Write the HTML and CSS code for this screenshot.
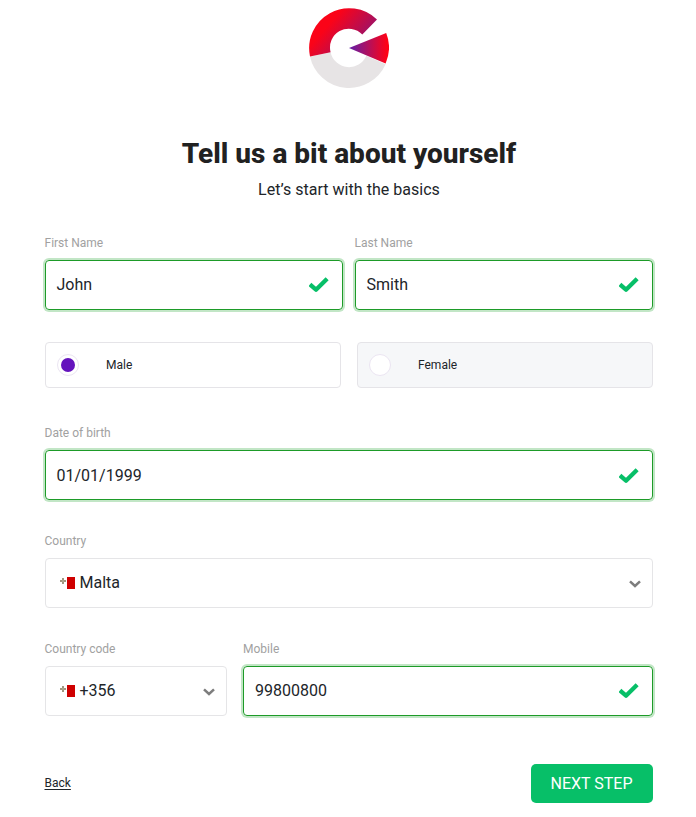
FILE: index.html
```html
<!DOCTYPE html>
<html lang="en">
<head>
<meta charset="utf-8">
<title>Tell us a bit about yourself</title>
<link rel="stylesheet" href="styles.css">
</head>
<body>
<svg width="0" height="0" class="defs">
  <symbol id="check" viewBox="0 0 20 16"><path d="M2.6 8.9 7 12.7 16.6 3.3" fill="none" stroke="#07bf68" stroke-width="4.3" stroke-linecap="square" stroke-linejoin="round"/></symbol>
  <symbol id="chevron" viewBox="0 0 12 8"><path d="M1 1.3 6 6 11 1.3" fill="none" stroke="#7d7d7d" stroke-width="2.5"/></symbol>
  <symbol id="malta" viewBox="0 0 16 12"><path d="M8 0h8v12H8z" fill="#cf0000"/><path d="M3 1h2v2h2v2H5v2H3V5H1V3h2z" fill="#a09880"/><path d="M3.5 3.5h1v1h-1z" fill="#d3cdbb"/></symbol>
</svg>
<main class="page">
  <svg class="logo" width="80" height="80" viewBox="0 0 80 80">
    <defs>
      <linearGradient id="arc" gradientUnits="userSpaceOnUse" x1="20" y1="16" x2="66" y2="56"><stop offset="0" stop-color="#fb0318"/><stop offset="1" stop-color="#601c9c"/></linearGradient>
      <linearGradient id="wedge" gradientUnits="userSpaceOnUse" x1="40" y1="40" x2="78" y2="40"><stop offset="0" stop-color="#621fa8"/><stop offset="1" stop-color="#ff0216"/></linearGradient>
    </defs>
    <path d="M1 48.4A40 40 0 0 0 76.6 56.3L57.3 47.7A18.8 18.8 0 0 1 21.6 44.2Z" fill="#e7e4e5"/>
    <path d="M1 48.4A40 40 0 0 1 68 11.5L53.3 26.4A18.8 18.8 0 0 0 21.6 44.2Z" fill="url(#arc)"/>
    <path d="M40 40 77.2 25A40 40 0 0 1 76.6 55.5Z" fill="url(#wedge)"/>
  </svg>
  <h1>Tell us a bit about yourself</h1>
  <p class="subtitle">Let’s start with the basics</p>
  <form class="form">
    <div class="row names">
      <div class="field"><label>First Name</label><div class="control valid"><span>John</span><svg class="check"><use href="#check"/></svg></div></div>
      <div class="field"><label>Last Name</label><div class="control valid"><span>Smith</span><svg class="check"><use href="#check"/></svg></div></div>
    </div>
    <div class="row genders">
      <div class="option selected"><i class="radio"></i><span>Male</span></div>
      <div class="option"><i class="radio"></i><span>Female</span></div>
    </div>
    <div class="field birth"><label>Date of birth</label><div class="control valid"><span>01/01/1999</span><svg class="check"><use href="#check"/></svg></div></div>
    <div class="field country"><label>Country</label><div class="control select"><svg class="flag"><use href="#malta"/></svg><span>Malta</span><svg class="chevron"><use href="#chevron"/></svg></div></div>
    <div class="row phone">
      <div class="field"><label>Country code</label><div class="control select"><svg class="flag"><use href="#malta"/></svg><span>+356</span><svg class="chevron"><use href="#chevron"/></svg></div></div>
      <div class="field mobile"><label>Mobile</label><div class="control valid"><span>99800800</span><svg class="check"><use href="#check"/></svg></div></div>
    </div>
    <div class="actions"><a href="#">Back</a><button type="button">NEXT STEP</button></div>
  </form>
</main>
</body>
</html>
```
FILE: styles.css
```css
* { box-sizing: border-box; }
body { margin: 0; background: #fff; color: #212529; font-family: Roboto, sans-serif; }
.defs { display: block; }
.page { padding: 8px 43px 0 45px; }
.logo { display: block; margin: 0 auto; }
h1 { margin: 49px 0 0; font-size: 28px; line-height: 34px; font-weight: 800; text-align: center; color: #212121; }
.subtitle { margin: 7px 0 0; font-size: 16px; line-height: 24px; text-align: center; letter-spacing: 0.03px; }
.form { margin-top: 33px; }
.row { display: grid; }
.names { grid-template-columns: 1fr 1fr; gap: 12px; }
.genders { grid-template-columns: 1fr 1fr; gap: 16px; margin-top: 32px; }
.phone { grid-template-columns: 182px 1fr; gap: 16px; margin-top: 33px; }
label { display: block; height: 25px; margin-left: -0.5px; font-size: 12px; line-height: 16px; color: #a1a1a1; }
.control { display: flex; align-items: center; height: 50px; padding: 0 13px 0 10.5px; border: 1px solid #e5e5e7; border-radius: 4px; font-size: 16px; line-height: 24px; }
.valid { border-color: #1d9b28; box-shadow: 0 0 0 2px #c2e6c6; }
.select { padding: 0 11px 0 13px; }
.mobile label { margin-left: 0; }
.mobile .control { padding-left: 11px; }
.check { width: 20px; height: 16px; margin: -1px 0 0 auto; }
.birth .control span { padding-top: 2px; }
.birth .check { margin-top: 1px; }
.chevron { width: 12px; height: 8px; margin: 1px 0 0 auto; }
.flag { width: 16px; height: 12px; margin-right: 4.5px; }
.option { display: flex; align-items: center; height: 46px; padding-left: 11px; border: 1px solid #e5e4e8; border-radius: 4px; background: #f6f7f9; font-size: 12px; }
.option.selected { background: #fff; }
.radio { display: flex; align-items: center; justify-content: center; width: 22px; height: 22px; margin-right: 27px; border: 1px solid #ebe5f2; border-radius: 50%; background: #fff; }
.selected .radio::before { content: ""; width: 14px; height: 14px; border-radius: 50%; background: #6413bd; }
.birth { margin-top: 37px; }
.country { margin-top: 33px; }
.actions { display: flex; align-items: center; justify-content: space-between; margin-top: 48px; }
.actions a { margin: -2px 0 0 -0.5px; font-size: 12px; color: #212529; text-underline-offset: 2px; }
button { width: 122px; height: 39px; padding: 0 1px 0 0; border: 0; border-radius: 5px; background: #07bf68; color: #fff; font: 400 16px Roboto, sans-serif; }
```
